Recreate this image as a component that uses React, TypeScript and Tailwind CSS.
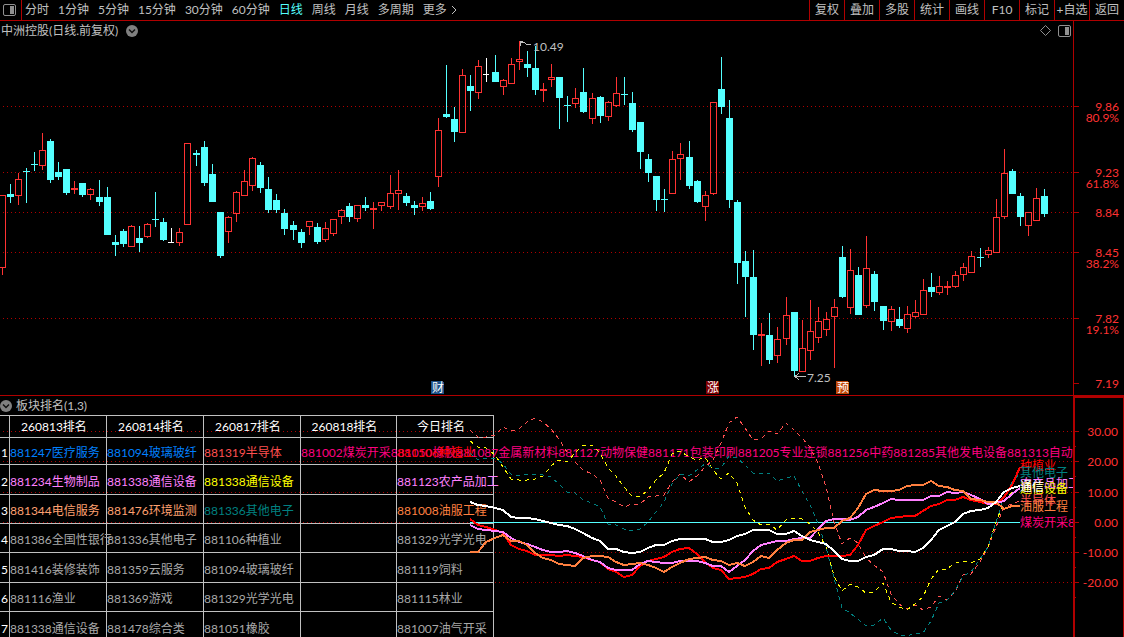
import clsx from 'clsx'

type Kind = 'up' | 'down' | 'flat'
type Bar = [x: number, high: number, top: number, bottom: number, low: number, kind: Kind]

const PERIODS = ['分时', '1分钟', '5分钟', '15分钟', '30分钟', '60分钟', '日线', '周线', '月线', '多周期']
const TOOLS = ['复权', '叠加', '多股', '统计', '画线', 'F10', '标记', '+自选', '返回']

const CANDLE_COLORS = { up: '#ff3232', down: '#54ffff', flat: '#ffffff' }

const BARS: Bar[] = [
  [2, 195, 195, 268, 275, 'up'],
  [10, 184, 194, 197, 203, 'down'],
  [18, 173, 179, 196, 205, 'up'],
  [26, 168, 171, 172, 203, 'down'],
  [34, 152, 164, 165, 171, 'down'],
  [42, 133, 150, 166, 170, 'up'],
  [50, 139, 141, 180, 183, 'down'],
  [58, 162, 172, 177, 180, 'down'],
  [66, 169, 169, 193, 195, 'down'],
  [74, 181, 188, 190, 194, 'up'],
  [82, 183, 183, 195, 197, 'down'],
  [90, 188, 189, 195, 200, 'up'],
  [99, 180, 197, 202, 206, 'down'],
  [107, 187, 197, 235, 235, 'down'],
  [115, 235, 242, 245, 256, 'down'],
  [123, 229, 231, 244, 247, 'down'],
  [131, 225, 226, 247, 247, 'up'],
  [139, 226, 238, 243, 252, 'down'],
  [147, 223, 224, 237, 238, 'up'],
  [155, 192, 219, 220, 227, 'down'],
  [163, 218, 222, 240, 241, 'down'],
  [171, 228, 242, 243, 243, 'flat'],
  [179, 228, 232, 243, 246, 'up'],
  [187, 143, 143, 225, 225, 'up'],
  [196, 150, 153, 155, 166, 'down'],
  [204, 141, 147, 183, 186, 'down'],
  [212, 164, 174, 202, 202, 'down'],
  [220, 212, 212, 256, 258, 'down'],
  [228, 216, 217, 232, 243, 'up'],
  [236, 191, 192, 214, 222, 'up'],
  [244, 170, 181, 196, 196, 'up'],
  [252, 157, 158, 186, 191, 'up'],
  [260, 162, 165, 188, 193, 'down'],
  [268, 177, 189, 210, 213, 'down'],
  [276, 194, 200, 210, 213, 'down'],
  [284, 209, 213, 229, 235, 'down'],
  [293, 221, 225, 230, 240, 'down'],
  [301, 229, 232, 243, 248, 'down'],
  [309, 221, 221, 227, 235, 'up'],
  [317, 223, 227, 242, 244, 'down'],
  [325, 222, 228, 240, 242, 'up'],
  [333, 219, 219, 234, 236, 'up'],
  [341, 209, 210, 217, 224, 'up'],
  [349, 203, 206, 217, 222, 'down'],
  [357, 205, 205, 219, 222, 'up'],
  [365, 197, 205, 208, 211, 'down'],
  [373, 202, 208, 210, 229, 'up'],
  [381, 202, 202, 206, 211, 'up'],
  [390, 175, 193, 207, 209, 'up'],
  [398, 170, 190, 194, 210, 'up'],
  [406, 193, 196, 203, 206, 'down'],
  [414, 201, 205, 208, 215, 'down'],
  [422, 197, 203, 207, 211, 'up'],
  [430, 192, 201, 209, 210, 'down'],
  [438, 118, 130, 177, 187, 'up'],
  [446, 65, 114, 117, 118, 'down'],
  [454, 107, 119, 132, 142, 'down'],
  [462, 69, 75, 133, 133, 'up'],
  [470, 75, 86, 91, 111, 'down'],
  [478, 60, 66, 93, 99, 'up'],
  [486, 58, 74, 75, 82, 'flat'],
  [495, 55, 72, 82, 82, 'down'],
  [503, 79, 80, 87, 95, 'up'],
  [511, 58, 64, 84, 84, 'up'],
  [519, 41, 59, 62, 70, 'up'],
  [527, 51, 64, 68, 77, 'down'],
  [535, 46, 68, 90, 95, 'down'],
  [543, 83, 89, 91, 102, 'up'],
  [551, 64, 77, 80, 87, 'up'],
  [559, 77, 77, 98, 129, 'down'],
  [567, 96, 105, 106, 122, 'down'],
  [575, 88, 98, 104, 108, 'up'],
  [583, 68, 92, 112, 113, 'down'],
  [592, 93, 98, 119, 124, 'up'],
  [600, 96, 97, 116, 123, 'down'],
  [608, 101, 102, 117, 121, 'up'],
  [616, 77, 93, 106, 107, 'up'],
  [624, 77, 94, 95, 105, 'down'],
  [632, 92, 103, 130, 132, 'down'],
  [640, 122, 122, 152, 169, 'down'],
  [648, 154, 159, 173, 182, 'down'],
  [656, 176, 176, 200, 211, 'down'],
  [664, 189, 199, 200, 212, 'down'],
  [672, 151, 159, 194, 194, 'up'],
  [680, 143, 154, 159, 180, 'up'],
  [689, 141, 157, 186, 189, 'down'],
  [697, 180, 181, 202, 203, 'down'],
  [705, 191, 195, 207, 221, 'up'],
  [713, 102, 102, 194, 195, 'up'],
  [721, 57, 89, 107, 114, 'down'],
  [729, 100, 118, 200, 208, 'down'],
  [737, 200, 202, 263, 284, 'down'],
  [745, 251, 261, 277, 317, 'down'],
  [753, 250, 277, 335, 350, 'down'],
  [761, 323, 334, 336, 366, 'up'],
  [769, 313, 335, 360, 364, 'down'],
  [777, 327, 339, 356, 363, 'up'],
  [786, 297, 315, 339, 345, 'up'],
  [794, 312, 312, 371, 376, 'down'],
  [802, 320, 348, 372, 372, 'up'],
  [810, 300, 331, 351, 360, 'up'],
  [818, 307, 321, 338, 343, 'up'],
  [826, 312, 319, 330, 336, 'up'],
  [834, 299, 307, 317, 368, 'up'],
  [842, 246, 257, 297, 298, 'down'],
  [850, 249, 270, 308, 314, 'up'],
  [858, 267, 275, 315, 315, 'down'],
  [866, 236, 268, 306, 308, 'up'],
  [874, 271, 274, 302, 311, 'down'],
  [883, 306, 306, 321, 330, 'down'],
  [891, 306, 309, 322, 331, 'up'],
  [899, 307, 319, 326, 328, 'down'],
  [907, 306, 314, 329, 333, 'up'],
  [915, 300, 312, 317, 318, 'up'],
  [923, 279, 290, 315, 315, 'up'],
  [931, 273, 287, 292, 297, 'down'],
  [939, 276, 286, 293, 295, 'up'],
  [947, 281, 286, 288, 295, 'up'],
  [955, 271, 275, 287, 288, 'up'],
  [963, 263, 267, 275, 281, 'up'],
  [971, 251, 256, 273, 273, 'up'],
  [980, 248, 257, 258, 267, 'down'],
  [988, 247, 250, 255, 258, 'up'],
  [996, 199, 217, 253, 253, 'up'],
  [1004, 149, 173, 217, 219, 'up'],
  [1012, 169, 171, 194, 194, 'down'],
  [1020, 193, 196, 217, 226, 'down'],
  [1028, 212, 212, 226, 236, 'up'],
  [1036, 188, 198, 221, 221, 'up'],
  [1044, 189, 196, 214, 217, 'down'],
]

const PRICE_LEVELS = [
  { y: 106, price: '9.86', pct: '80.9%' },
  { y: 172, price: '9.23', pct: '61.8%' },
  { y: 212, price: '8.84' },
  { y: 252, price: '8.45', pct: '38.2%' },
  { y: 318, price: '7.82', pct: '19.1%' },
  { y: 383, price: '7.19' },
]

const FLAGS = [
  { x: 431, label: '财', fill: '#1c5088' },
  { x: 706, label: '涨', fill: '#800000' },
  { x: 836, label: '预', fill: '#c04808' },
]

const RANK_LEVELS = [
  { y: 35, label: '30.00' },
  { y: 65, label: '20.00' },
  { y: 96, label: '10.00' },
  { y: 126, label: '0.00' },
  { y: 156, label: '-10.00' },
  { y: 186, label: '-20.00' },
]

// first bar that the ranking lines are drawn for
const RANK_START = 58

const SERIES = [
  {
    color: '#ff5050',
    dashed: true,
    ys: [34, 41, 41, 39, 31, 35, 33, 26, 22, 26, 33, 43, 56, 66, 74, 78, 84, 102, 106, 111, 108, 108, 101, 100, 99, 86, 78, 86, 80, 71, 64, 47, 27, 21, 32, 44, 43, 35, 38, 27, 34, 42, 51, 67, 91, 126, 148, 142, 147, 162, 169, 176, 198, 208, 213, 209, 214, 211, 200, 204, 196, 179, 178, 166, 151, 131, 111, 108, 105],
  },
  {
    color: '#ffff00',
    dashed: true,
    ys: [45, 51, 52, 59, 71, 83, 84, 84, 83, 80, 70, 64, 66, 57, 49, 49, 57, 72, 80, 91, 100, 101, 94, 84, 77, 58, 55, 61, 64, 61, 74, 83, 77, 87, 111, 124, 129, 128, 134, 124, 122, 123, 128, 136, 151, 180, 195, 188, 191, 197, 196, 187, 206, 211, 214, 208, 201, 183, 173, 173, 167, 165, 167, 163, 151, 126, 106, 96, 92],
  },
  {
    color: '#008080',
    dashed: true,
    ys: [57, 64, 62, 62, 68, 78, 80, 78, 78, 79, 81, 88, 96, 97, 104, 107, 111, 128, 129, 133, 135, 133, 126, 116, 106, 88, 78, 80, 74, 68, 72, 72, 60, 62, 69, 77, 77, 77, 85, 82, 80, 95, 109, 127, 151, 182, 212, 217, 223, 230, 229, 222, 234, 239, 240, 237, 237, 225, 207, 204, 195, 180, 176, 163, 151, 126, 101, 86, 77],
  },
  {
    color: '#ff0000',
    dashed: false,
    ys: [123, 129, 131, 134, 137, 149, 153, 155, 159, 159, 159, 160, 159, 160, 161, 164, 166, 173, 176, 181, 179, 170, 165, 163, 161, 156, 153, 152, 158, 166, 172, 174, 183, 182, 181, 178, 173, 172, 166, 163, 160, 165, 165, 162, 160, 160, 160, 159, 149, 134, 130, 126, 122, 121, 120, 120, 115, 110, 108, 104, 104, 101, 104, 106, 108, 108, 101, 89, 71],
  },
  {
    color: '#ff80ff',
    dashed: false,
    ys: [129, 133, 134, 135, 136, 142, 146, 148, 151, 154, 156, 156, 155, 157, 160, 164, 166, 172, 174, 174, 174, 168, 165, 166, 167, 167, 165, 165, 165, 167, 170, 170, 176, 170, 164, 155, 149, 147, 145, 145, 143, 142, 142, 133, 125, 123, 123, 124, 121, 114, 111, 107, 103, 104, 104, 104, 104, 100, 100, 96, 97, 96, 99, 103, 108, 107, 105, 98, 92],
  },
  {
    color: '#ff8040',
    dashed: false,
    ys: [156, 156, 146, 142, 139, 145, 145, 149, 157, 162, 164, 168, 169, 170, 162, 160, 160, 161, 166, 169, 168, 167, 169, 172, 176, 171, 167, 163, 162, 161, 164, 165, 169, 167, 170, 166, 160, 162, 154, 147, 144, 144, 136, 134, 132, 132, 125, 122, 112, 98, 94, 95, 95, 94, 90, 89, 89, 85, 90, 91, 94, 95, 103, 104, 106, 106, 113, 110, 110],
  },
  {
    color: '#ffffff',
    dashed: false,
    ys: [106, 109, 110, 112, 114, 121, 122, 122, 123, 125, 127, 129, 130, 133, 137, 142, 145, 153, 153, 156, 157, 156, 152, 149, 149, 145, 143, 143, 143, 143, 146, 146, 144, 140, 138, 134, 134, 134, 138, 138, 135, 140, 144, 146, 148, 155, 163, 165, 165, 161, 159, 153, 153, 155, 155, 156, 152, 144, 134, 130, 126, 118, 115, 114, 112, 106, 96, 92, 90],
  },
]

const LINE_LABELS = [
  { y: 69, label: '种植业', color: '#ff0000' },
  { y: 76, label: '其他电子', color: '#008080' },
  { y: 87, label: '农产品加工', color: '#ff80ff' },
  { y: 92, label: '通信设备', color: '#ffff00' },
  { y: 90, label: '通信', color: '#ffffff' },
  { y: 104, label: '半导体', color: '#ff5050' },
  { y: 110, label: '油服工程', color: '#ff8040' },
  { y: 126, label: '煤炭开采881050橡胶', color: '#ff0080' },
]

const HEADERS = ['260813排名', '260814排名', '260817排名', '260818排名', '今日排名']

const ROWS = [
  {
    height: 'h-[27px]',
    cells: [
      ['881247医疗服务', 'text-[#0080ff]'],
      ['881094玻璃玻纤', 'text-[#0080ff]'],
      ['881319半导体', 'text-[#ff5050]'],
      [
        '881002煤炭开采881050橡胶881087金属新材料881127动物保健881171包装印刷881205专业连锁881256中药881285其他发电设备881313自动化设备',
        'text-[#ff0080]',
      ],
      ['881106种植业', 'text-[#ff0000]'],
    ],
  },
  {
    height: 'h-[30px]',
    cells: [
      ['881234生物制品', 'text-[#ff80ff]'],
      ['881338通信设备', 'text-[#ff80ff]'],
      ['881338通信设备', 'text-[#ffff00]'],
      ['', ''],
      ['881123农产品加工', 'text-[#ff80ff]'],
    ],
  },
  {
    height: 'h-[29px]',
    cells: [
      ['881344电信服务', 'text-[#ffa070]'],
      ['881476环境监测', 'text-[#ffa070]'],
      ['881336其他电子', 'text-[#008080]'],
      ['', ''],
      ['881008油服工程', 'text-[#ff8040]'],
    ],
  },
  {
    height: 'h-[29px]',
    cells: [['881386全国性银行', ''], ['881336其他电子', ''], ['881106种植业', ''], ['', ''], ['881329光学光电', '']],
  },
  {
    height: 'h-[30px]',
    cells: [['881416装修装饰', ''], ['881359云服务', ''], ['881094玻璃玻纤', ''], ['', ''], ['881119饲料', '']],
  },
  {
    height: 'h-[29px]',
    cells: [['881116渔业', ''], ['881369游戏', ''], ['881329光学光电', ''], ['', ''], ['881115林业', '']],
  },
  {
    height: 'h-[30px]',
    cells: [['881338通信设备', ''], ['881478综合类', ''], ['881051橡胶', ''], ['', ''], ['881007油气开采', '']],
  },
]

function PanelIcon() {
  return (
    <svg width="13" height="12" viewBox="0 0 13 12" className="block" aria-hidden="true">
      <rect x="0.5" y="0.5" width="12" height="11" rx="1.5" fill="none" stroke="#909090" />
      <rect x="7" y="2" width="4" height="8" fill="#909090" />
    </svg>
  )
}

function DropButton({ label }: { label: string }) {
  return (
    <button type="button" aria-label={label} className="shrink-0">
      <svg width="12" height="12" viewBox="0 0 12 12" className="block">
        <circle cx="6" cy="6" r="6" fill="#808080" />
        <path d="M3 4.5 6 7.5 9 4.5" fill="none" stroke="#101010" strokeWidth="1.5" />
      </svg>
    </button>
  )
}

function GridLine({ y }: { y: number }) {
  return <line x1="3" x2="100%" y1={y + 0.5} y2={y + 0.5} stroke="#b00000" strokeDasharray="1 3" />
}

function Candle({ bar }: { bar: Bar }) {
  const [x, high, top, bottom, low, kind] = bar
  const color = CANDLE_COLORS[kind]
  const hollow = kind === 'up' && bottom - top > 2
  return (
    <g fill={color}>
      {high < top && <rect x={x} y={high} width="1" height={top - high} />}
      {low > bottom && <rect x={x} y={bottom} width="1" height={low - bottom} />}
      {hollow ? (
        <rect x={x - 2.5} y={top + 0.5} width="6" height={bottom - top - 1} fill="none" stroke={color} />
      ) : (
        <rect x={x - 3} y={top} width={kind === 'flat' ? 6 : 7} height={bottom - top} />
      )}
    </g>
  )
}

function Toolbar() {
  return (
    <header className="flex h-[21px] shrink-0 items-stretch border-b border-[#b00000]">
      <button type="button" aria-label="侧栏" className="flex w-[22px] items-center border-r border-[#b00000] pl-[3px]">
        <PanelIcon />
      </button>
      <nav className="flex flex-1 items-center gap-[9px] pl-[3px]">
        {PERIODS.map((p) => (
          <button key={p} type="button" className={clsx('whitespace-nowrap', p === '日线' && 'text-[#54ffff]')}>
            {p}
          </button>
        ))}
        <button type="button" className="flex items-center gap-1 whitespace-nowrap">
          更多
          <svg width="6" height="10" viewBox="0 0 6 10" fill="none" stroke="currentColor" aria-hidden="true">
            <path d="M1 1 5 5 1 9" />
          </svg>
        </button>
      </nav>
      <div className="flex">
        {TOOLS.map((t) => (
          <button key={t} type="button" className="w-[35px] border-l border-[#b00000] text-center whitespace-nowrap">
            {t}
          </button>
        ))}
      </div>
    </header>
  )
}

function PriceChart() {
  return (
    <section className="flex h-[374px] shrink-0">
      <div className="flex min-w-0 flex-1 flex-col">
        <div className="flex h-[19px] items-center gap-2 px-px">
          <h1>中洲控股(日线.前复权)</h1>
          <DropButton label="切换复权" />
          <div className="ml-auto flex items-center gap-[7px] pr-px">
            <button type="button" aria-label="标记">
              <svg width="11" height="11" viewBox="0 0 11 11" className="block" fill="none" stroke="#909090">
                <path d="M5.5 0.5 10.5 5.5 5.5 10.5 0.5 5.5Z" />
              </svg>
            </button>
            <button type="button" aria-label="面板">
              <PanelIcon />
            </button>
          </div>
        </div>
        <svg className="block h-[355px] w-full" shapeRendering="crispEdges" role="img" aria-label="日线">
          <g transform="translate(0,-40)">
            {PRICE_LEVELS.slice(0, 5).map((l) => (
              <GridLine key={l.y} y={l.y} />
            ))}
            {BARS.map((bar) => (
              <Candle key={bar[0]} bar={bar} />
            ))}
            <g fill="none" stroke="#c0c0c0">
              <path d="M520.5 46V41.5H523M520 42.5H524L527 44.5H531" />
              <path d="M795 376.5H806M799 373 795 376.5 799 380" />
            </g>
            <g fill="#c0c0c0">
              <text x="533" y="51">10.49</text>
              <text x="807" y="382">7.25</text>
            </g>
            {FLAGS.map((f) => (
              <g key={f.label}>
                <path d={`M${f.x} 381h11l2 2v11h-13z`} fill={f.fill} />
                <text x={f.x + 1} y="392" fill="#ffffff">
                  {f.label}
                </text>
              </g>
            ))}
          </g>
        </svg>
      </div>
      <svg className="block h-full w-[51px] shrink-0 border-l border-[#b00000]" shapeRendering="crispEdges">
        <g transform="translate(0,-21)" fill="#ff3232" textAnchor="end">
          {PRICE_LEVELS.map((l) => (
            <g key={l.y}>
              <rect x="0" y={l.y} width="5" height="1" fill="#b00000" />
              <text x="45" y={l.y + 5}>{l.price}</text>
              {l.pct && <text x="45" y={l.y + 16}>{l.pct}</text>}
            </g>
          ))}
        </g>
      </svg>
    </section>
  )
}

function RankTable() {
  return (
    <table className="w-[494px] table-fixed border-separate border-spacing-0 border-t border-[#c0c0c0] text-[#a8a8a8]">
      <colgroup>
        <col className="w-[10px]" />
        <col className="w-[97px]" />
        <col className="w-[97px]" />
        <col className="w-[97px]" />
        <col className="w-[96px]" />
        <col className="w-[97px]" />
      </colgroup>
      <thead>
        <tr className="h-[22px] text-white">
          <td className="border-r border-b border-[#c0c0c0] p-0" />
          {HEADERS.map((h) => (
            <th key={h} scope="col" className="border-r border-b border-[#c0c0c0] p-0 pr-2 font-normal whitespace-nowrap">
              {h}
            </th>
          ))}
        </tr>
      </thead>
      <tbody>
        {ROWS.map((row, i) => (
          <tr key={i} className={row.height}>
            <th scope="row" className="border-r border-b border-[#c0c0c0] p-0 pt-1 pr-px text-right font-normal text-white">
              {i + 1}
            </th>
            {row.cells.map(([text, color], j) => (
              <td key={j} className={clsx('border-r border-b border-[#c0c0c0] p-0 pt-1 whitespace-nowrap', color)}>
                {text}
              </td>
            ))}
          </tr>
        ))}
      </tbody>
    </table>
  )
}

function RankPanel() {
  return (
    <section className="flex min-h-0 flex-1 border-t border-[#b00000]">
      <div className="relative min-w-0 flex-1 overflow-hidden">
        <svg className="pointer-events-none absolute inset-0 h-full w-full" shapeRendering="crispEdges">
          {RANK_LEVELS.map((l) => (
            <GridLine key={l.y} y={l.y} />
          ))}
        </svg>
        <div className="relative">
          <div className="flex h-[19px] items-center gap-[4px]">
            <DropButton label="指标菜单" />
            <h2>板块排名(1,3)</h2>
          </div>
          <RankTable />
        </div>
        {/* ranking lines run over the last column of the table */}
        <svg className="pointer-events-none absolute inset-0 h-full w-full" shapeRendering="crispEdges">
          <rect x="470" y="126" width="550" height="1" fill="#54ffff" />
          {SERIES.map((s) => (
            <polyline
              key={s.color}
              points={s.ys.map((y, i) => `${BARS[RANK_START + i][0]},${y}`).join(' ')}
              fill="none"
              stroke={s.color}
              strokeWidth={s.dashed ? 1 : 2}
              strokeDasharray={s.dashed ? '4 4' : undefined}
            />
          ))}
          {LINE_LABELS.map((l) => (
            <text key={l.label} x="1020" y={l.y + 5} fill={l.color}>
              {l.label}
            </text>
          ))}
        </svg>
      </div>
      <svg
        className="block h-full w-[51px] shrink-0 border-t-2 border-r border-l-2 border-[#b00000]"
        shapeRendering="crispEdges"
      >
        <g transform="translate(0,-2)" fill="#ff3232" textAnchor="end">
          {RANK_LEVELS.map((l) => (
            <g key={l.y}>
              <rect x="0" y={l.y} width="4" height="1" fill="#b00000" />
              <rect x="0" y={l.y + 15} width="1" height="1" fill="#b00000" />
              <text x="43" y={l.y + 5}>{l.label}</text>
            </g>
          ))}
        </g>
      </svg>
    </section>
  )
}

export default function App() {
  return (
    <div
      lang="zh-CN"
      className="flex h-screen flex-col overflow-hidden bg-black font-['Lato','Noto_Sans_CJK_SC',sans-serif] text-[12px] leading-[14px] text-[#c0c0c0]"
    >
      <Toolbar />
      <PriceChart />
      <RankPanel />
    </div>
  )
}
